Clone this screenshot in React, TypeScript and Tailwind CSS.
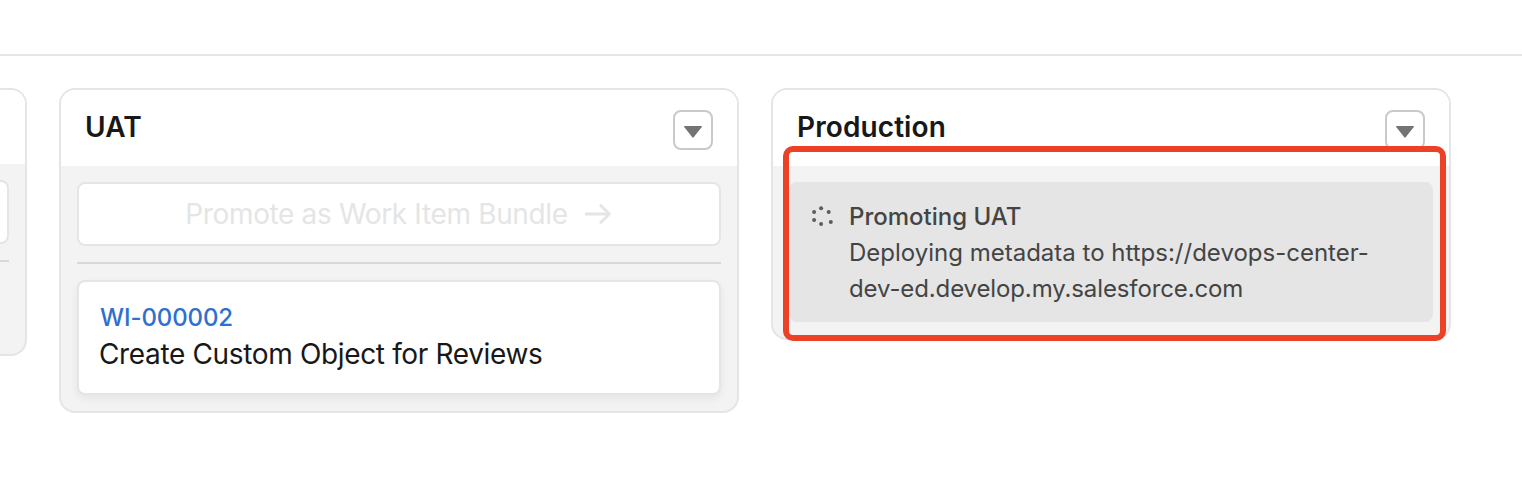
import type { ReactNode } from 'react';

function MenuButton() {
  return (
    <button
      aria-label="Stage actions"
      className="flex h-10 w-10 shrink-0 items-center justify-center rounded-lg border-2 border-[#c9c9c9] bg-white"
    >
      <svg viewBox="0 0 18 12" className="mt-1 h-3 w-[18px]" fill="#747474">
        <path d="M.6 0h16.8c.5 0 .7.5.4.9L9.7 11.3c-.4.5-1 .5-1.4 0L.2.9C-.1.5.1 0 .6 0Z" />
      </svg>
    </button>
  );
}

function Stage({ title, children }: { title: string; children: ReactNode }) {
  return (
    <section className="w-[680px] shrink-0 overflow-hidden rounded-2xl border-2 border-[#e5e5e5] bg-[#f3f3f3]">
      <header className="flex h-[76px] items-start justify-between bg-white px-6 pt-5">
        <h2 className="text-[28px] leading-[34px] font-semibold tracking-[0.1px] text-[#181818]">{title}</h2>
        <MenuButton />
      </header>
      <div className="p-4">{children}</div>
    </section>
  );
}

function ArrowRight() {
  return (
    <svg viewBox="0 0 28 28" className="h-7 w-7" fill="none" stroke="currentColor" strokeWidth="2.8">
      <path d="M0 14h24.5M15 4.8l9.3 9.2-9.3 9.2" />
    </svg>
  );
}

function Spinner() {
  return (
    <svg viewBox="0 0 28 28" className="mt-1 h-7 w-7 shrink-0" fill="#5c5c5c">
      <circle cx="5.1" cy="10.1" r="2" />
      <circle cx="12.1" cy="6.2" r="2" />
      <circle cx="19.7" cy="9.9" r="2" />
      <circle cx="5.1" cy="18.1" r="2" />
      <circle cx="12.1" cy="22.1" r="2" />
      <circle cx="21.8" cy="19.9" r="2" />
    </svg>
  );
}

export default function App() {
  return (
    <div className="h-[496px] w-full overflow-hidden bg-white font-['Inter',sans-serif]">
      <div className="h-14 border-b-2 border-[#e5e5e5]" />
      <main className="flex items-start gap-8 pt-8">
        <section className="h-[268px] w-[27px] shrink-0 overflow-hidden rounded-r-2xl border-2 border-l-0 border-[#e5e5e5] bg-[#f3f3f3]">
          <div className="h-[74px] bg-white" />
          <div className="pt-4 pr-4">
            <div className="h-16 rounded-r-lg border-2 border-l-0 border-[#e5e5e5] bg-white" />
            <div className="mt-4 h-0.5 bg-[#d8d8d8]" />
          </div>
        </section>

        <Stage title="UAT">
          <button
            disabled
            className="flex h-16 w-full items-center justify-center gap-[17px] rounded-lg border-2 border-[#e5e5e5] bg-white text-[28px] tracking-[-0.35px] text-[#e5e5e5]"
          >
            Promote as Work Item Bundle
            <ArrowRight />
          </button>
          <hr className="my-4 h-0.5 border-0 bg-[#d8d8d8]" />
          <article className="h-[115px] rounded-lg border-2 border-[#e5e5e5] bg-white px-5 pt-[18px] shadow-[0_4px_8px_rgba(0,0,0,0.06)]">
            <a className="block pl-px text-2xl leading-9 font-[550] tracking-[-0.1px] text-[#2e6fd0]">WI-000002</a>
            <p className="text-[28px] leading-9 tracking-[-0.35px] text-[#181818]">Create Custom Object for Reviews</p>
          </article>
        </Stage>

        <div className="relative">
          <Stage title="Production">
            <div className="flex h-[140px] gap-3 rounded-lg bg-[#e5e5e5] pt-4 pl-5 text-2xl leading-9 text-[#444444]">
              <Spinner />
              <div className="pt-px">
                <p className="font-[550]">Promoting UAT</p>
                <p>Deploying metadata to https://devops-center-</p>
                <p className="tracking-[-0.12px]">dev-ed.develop.my.salesforce.com</p>
              </div>
            </div>
          </Stage>
          <div className="pointer-events-none absolute top-[58px] left-3 h-[195px] w-[663px] rounded-[10px] border-6 border-[#ec4127]" />
        </div>
      </main>
    </div>
  );
}
